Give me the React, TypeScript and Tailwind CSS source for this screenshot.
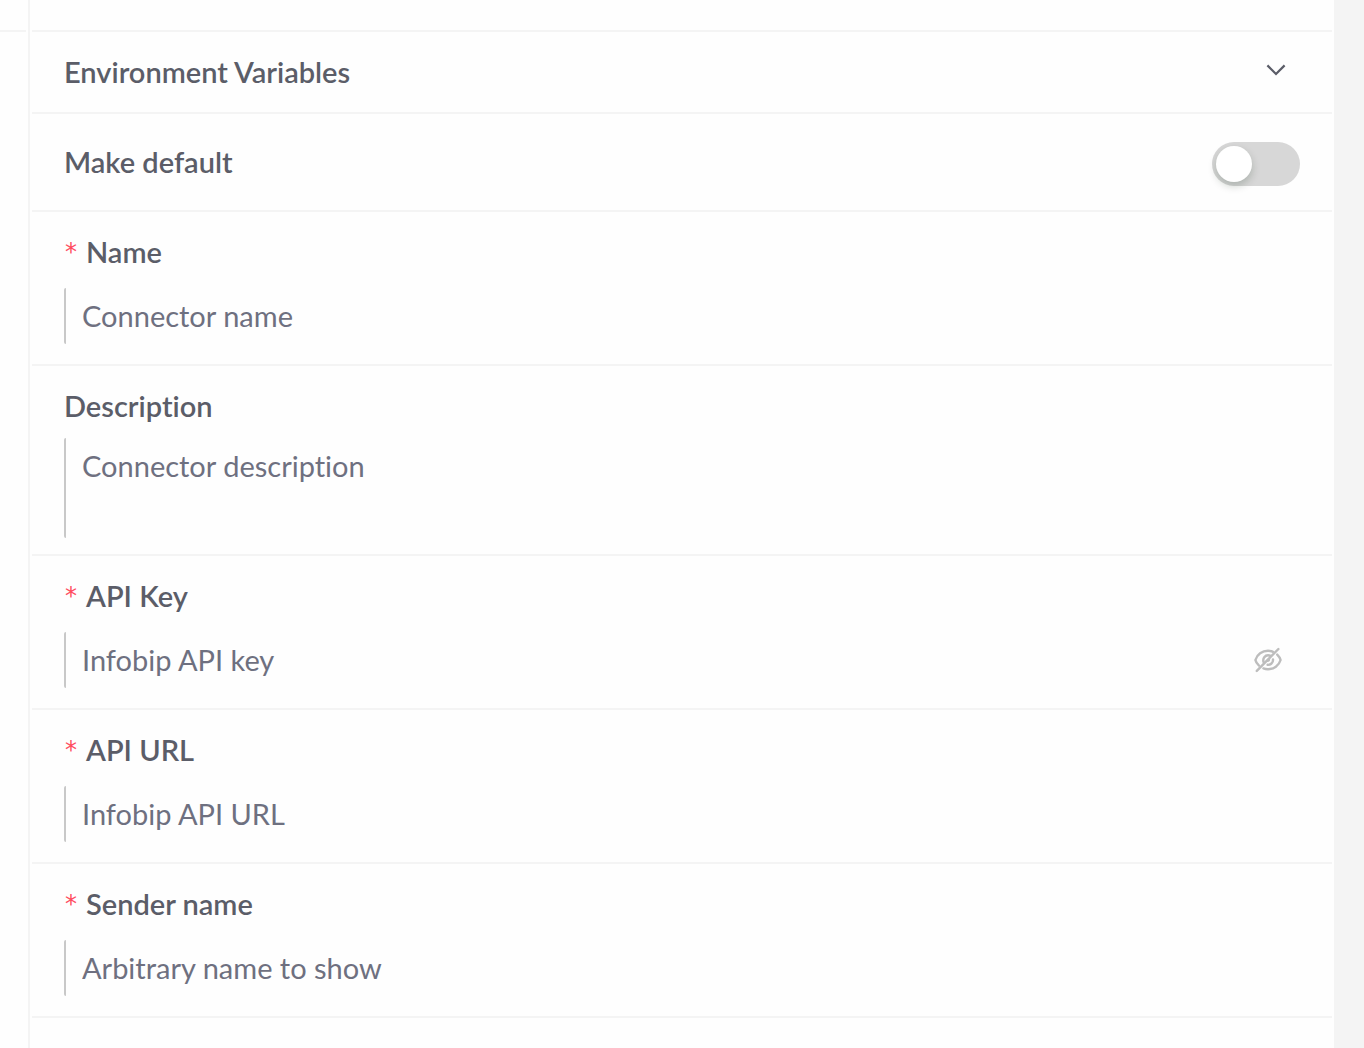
import React, { useState } from "react";

const inputClass =
  "w-full rounded-xs border-l-2 border-[#c8c8c8] bg-transparent px-4 text-[29px] text-[#6e7080] placeholder:text-[#6e7080] outline-none";

function Label({
  id,
  required,
  children,
}: {
  id: string;
  required?: boolean;
  children: React.ReactNode;
}) {
  return (
    <label
      htmlFor={id}
      className="flex items-center gap-2 font-semibold leading-10"
    >
      {required && (
        <span className="w-[14px] text-center font-['DejaVu_Sans'] text-2xl leading-10 font-normal text-[#ff4d5f]">
          *
        </span>
      )}
      {children}
    </label>
  );
}

function TextField({
  id,
  label,
  placeholder,
  secret,
}: {
  id: string;
  label: string;
  placeholder: string;
  secret?: boolean;
}) {
  const [hidden, setHidden] = useState(true);

  return (
    <div className="border-b-2 border-[#f4f4f4] px-8 py-5">
      <Label id={id} required>
        {label}
      </Label>
      <div className="relative mt-4">
        <input
          id={id}
          type={secret && hidden ? "password" : "text"}
          placeholder={placeholder}
          className={`${inputClass} block h-14 pb-0.5`}
        />
        {secret && (
          <button
            type="button"
            aria-label="Toggle visibility"
            onClick={() => setHidden(!hidden)}
            className="absolute top-3 right-4 flex size-8 items-center justify-center text-[#bdbdbd]"
          >
            <EyeOff />
          </button>
        )}
      </div>
    </div>
  );
}

function EyeOff() {
  return (
    <svg
      width="28"
      height="28"
      viewBox="0 0 28 28"
      fill="none"
      stroke="currentColor"
      strokeWidth="2.4"
      strokeLinecap="round"
    >
      <path d="M5 19.6C3.2 18 1.8 15.9 1.4 14C3 8.5 8.2 4.8 14 4.8C15.8 4.8 17.5 5.1 19 5.8" />
      <path d="M23.2 8.6C24.8 10.1 26 12 26.6 14C25 19.5 19.8 23.2 14 23.2C12.4 23.2 10.8 22.9 9.4 22.4" />
      <path d="M9.6 16.2C8.3 12.2 11.2 9.2 14 9.2C15 9.2 15.8 9.5 16.5 9.9" />
      <path d="M19 13.4C19.3 16.6 16.7 19.1 13.6 18.8" />
      <path d="M14.9 13.2C15.1 14.4 14.5 15 13.4 14.9" />
      <path d="M2.8 24.9L24.4 3" />
    </svg>
  );
}

export default function App() {
  return (
    <div className="flex min-h-screen bg-[#f4f4f4] pr-[30px] font-['Lato',sans-serif] text-[29px] text-[#5b5d68] [font-variant-ligatures:none]">
      <div className="flex flex-1 bg-[#fefefe]">
        <div className="mr-0.5 w-[26px] shrink-0">
          <div className="h-8 border-b-2 border-[#f4f4f4]" />
        </div>
        <form className="min-w-0 flex-1 border-l-2 border-[#f4f4f4] px-0.5">
          <div className="h-8 border-b-2 border-[#f4f4f4]" />

          <button
            type="button"
            className="flex w-full items-center justify-between border-b-2 border-[#f4f4f4] px-8 py-5 font-semibold leading-10"
          >
            Environment Variables
            <svg
              width="20"
              height="20"
              viewBox="0 0 20 20"
              fill="none"
              stroke="currentColor"
              strokeWidth="2.2"
              className="mr-3.5 mb-1"
            >
              <path d="M1.4 5.4L10 14L18.6 5.4" />
            </svg>
          </button>

          <div className="flex items-start justify-between border-b-2 border-[#f4f4f4] px-8 pt-7 pb-6">
            <Label id="default">Make default</Label>
            <input
              id="default"
              type="checkbox"
              role="switch"
              className="flex h-11 w-[88px] appearance-none rounded-full bg-[#d7d7d7] p-1 before:size-9 before:rounded-full before:bg-white before:shadow-[0_4px_8px_rgba(0,35,11,0.2)] checked:justify-end checked:bg-[#5b5d68]"
            />
          </div>

          <TextField id="name" label="Name" placeholder="Connector name" />

          <div className="border-b-2 border-[#f4f4f4] px-8 pt-5 pb-4">
            <Label id="description">Description</Label>
            <textarea
              id="description"
              placeholder="Connector description"
              className={`${inputClass} mt-3 block h-[100px] resize-none py-2 leading-10`}
            />
          </div>

          <TextField
            id="api-key"
            label="API Key"
            placeholder="Infobip API key"
            secret
          />
          <TextField
            id="api-url"
            label="API URL"
            placeholder="Infobip API URL"
          />
          <TextField
            id="sender"
            label="Sender name"
            placeholder="Arbitrary name to show"
          />
        </form>
      </div>
    </div>
  );
}
